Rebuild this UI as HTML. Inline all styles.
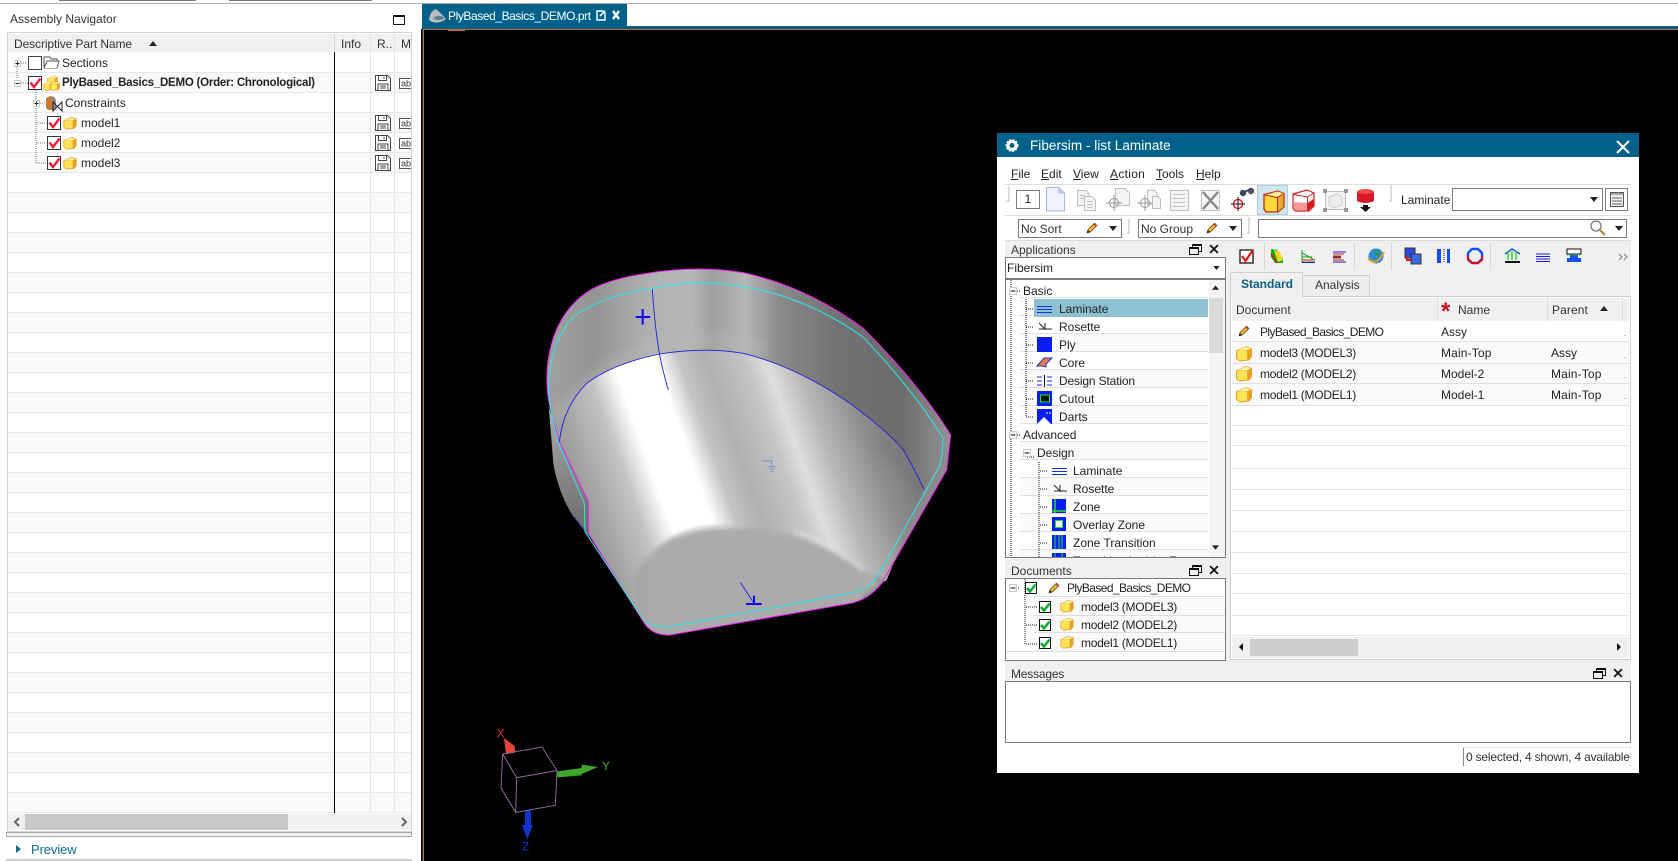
<!DOCTYPE html>
<html><head><meta charset="utf-8"><title>Assembly Navigator</title>
<style>
html,body{margin:0;padding:0;background:#fff}
#p{position:relative;width:1678px;height:861px;overflow:hidden;background:#fff;font:12px/16px "Liberation Sans",sans-serif;color:#222}
#p div{position:absolute;box-sizing:border-box}
.t{white-space:nowrap;height:16px}
.b{font-weight:bold}
.n{letter-spacing:-.6px}
.m{letter-spacing:-.27px}
svg{position:absolute;left:0;top:0;overflow:visible}
.box{background:#fff;border:1px solid #7a7a7a}
</style></head><body><div id="p">

<!-- top strips -->
<div style="left:59px;top:0;width:137px;height:1px;background:#777"></div>
<div style="left:229px;top:0;width:143px;height:1px;background:#777"></div>
<div style="left:0;top:3px;width:1678px;height:1px;background:#b0b0b0"></div>

<!-- left panel -->
<div class="t" style="left:10px;top:11px;color:#333">Assembly Navigator</div>
<div style="left:393px;top:15px;width:12px;height:10px;border:1px solid #111;border-top-width:2px"></div>
<div style="left:7px;top:32px;width:405px;height:800px;border:1px solid #d4d4d4;background:#fff"></div>
<div style="left:8px;top:34px;width:403px;height:18px;background:#f0f0f0"></div>
<div style="left:8px;top:53px;width:403px;height:760px;background:repeating-linear-gradient(#fff 0 19px,#e8e8e8 19px 20px,#f9f9f9 20px 39px,#e8e8e8 39px 40px)"></div>
<div style="left:370px;top:34px;width:1px;height:779px;background:#e4e4e4"></div>
<div style="left:394px;top:34px;width:1px;height:779px;background:#e4e4e4"></div>
<div style="left:334px;top:34px;width:1px;height:18px;background:#d8d8d8"></div>
<div style="left:334px;top:52px;width:1px;height:761px;background:#000"></div>
<div class="t" style="left:14px;top:36px;color:#333;letter-spacing:-.1px">Descriptive Part Name</div>
<div class="t" style="left:341px;top:36px;color:#333">Info</div>
<div class="t" style="left:377px;top:36px;color:#333">R..</div>
<div style="left:401px;top:36px;width:9px;height:16px;overflow:hidden;color:#333">M</div>
<div class="t" style="left:62px;top:55px">Sections</div>
<div class="t b" style="left:62px;top:75px;font-size:11.5px;letter-spacing:-.23px">PlyBased_Basics_DEMO (Order: Chronological)</div>
<div class="t" style="left:65px;top:95px">Constraints</div>
<div class="t" style="left:81px;top:115px">model1</div>
<div class="t" style="left:81px;top:135px">model2</div>
<div class="t" style="left:81px;top:155px">model3</div>
<div style="left:8px;top:814px;width:403px;height:16px;background:#f0f0f0"></div>
<div style="left:25px;top:814px;width:263px;height:16px;background:#c9c9c9"></div>
<div style="left:6px;top:832px;width:406px;height:5px;background:#efefef;border:1px solid #aaa"></div>
<div class="t" style="left:31px;top:842px;color:#0d6d94;font-size:13px;letter-spacing:-.1px">Preview</div>
<div style="left:6px;top:859px;width:406px;height:2px;background:#d0d0d0"></div>

<!-- viewport -->
<div style="left:421px;top:4px;width:1257px;height:857px;background:#000"></div>
<div style="left:421px;top:4px;width:1257px;height:25px;background:#fff"></div>
<div style="left:422px;top:4px;width:205px;height:24px;background:#00628b"></div>
<div style="left:422px;top:26px;width:1256px;height:3px;background:#00628b"></div>
<div style="left:423px;top:29px;width:1255px;height:1px;background:#c8682a"></div>
<div style="left:422px;top:29px;width:1px;height:832px;background:#00384f"></div>
<div style="left:423px;top:29px;width:1px;height:832px;background:#c8682a"></div>
<div style="left:448px;top:30px;width:17px;height:1px;background:#d05a7a"></div>
<div class="t" style="left:448px;top:8px;color:#fff;font-size:12px;letter-spacing:-.42px">PlyBased_Basics_DEMO.prt</div>

<!-- 3D scene -->
<svg style="left:530px;top:250px" width="450" height="400" viewBox="0 0 1350 1200">
<defs>
<linearGradient id="wall" gradientUnits="userSpaceOnUse" x1="50" y1="0" x2="1260" y2="0">
<stop offset="0" stop-color="#a0a0a0"/><stop offset=".12" stop-color="#949494"/><stop offset=".26" stop-color="#b2b2b2"/><stop offset=".36" stop-color="#b6b6b6"/><stop offset=".41" stop-color="#9e9e9e"/><stop offset=".49" stop-color="#b6b6b6"/><stop offset=".58" stop-color="#8a8a8a"/><stop offset=".72" stop-color="#727272"/><stop offset=".88" stop-color="#6c6c6c"/><stop offset="1" stop-color="#929292"/>
</linearGradient>
<linearGradient id="cone" gradientUnits="userSpaceOnUse" x1="100" y1="700" x2="1250" y2="293">
<stop offset="0" stop-color="#939393"/><stop offset=".06" stop-color="#a4a4a4"/><stop offset=".15" stop-color="#c4c4c4"/><stop offset=".215" stop-color="#fff"/><stop offset=".315" stop-color="#fff"/><stop offset=".37" stop-color="#c4c4c4"/><stop offset=".43" stop-color="#b0b0b0"/><stop offset=".52" stop-color="#c4c4c4"/><stop offset=".57" stop-color="#dedede"/><stop offset=".64" stop-color="#b8b8b8"/><stop offset=".74" stop-color="#8e8e8e"/><stop offset=".86" stop-color="#747474"/><stop offset="1" stop-color="#7a7a7a"/>
</linearGradient>
<linearGradient id="shell" gradientUnits="userSpaceOnUse" x1="60" y1="500" x2="170" y2="850">
<stop offset="0" stop-color="#a8a8a8"/><stop offset=".6" stop-color="#808080"/><stop offset="1" stop-color="#6a6a6a"/>
</linearGradient>
<filter id="bl" x="-20%" y="-20%" width="140%" height="140%"><feGaussianBlur stdDeviation="7"/></filter>
<filter id="bl2" x="-30%" y="-30%" width="160%" height="160%"><feGaussianBlur stdDeviation="18"/></filter>
<clipPath id="oc"><path d="M340 1115Q365 1158 420 1155L960 1060Q1015 1050 1055 1000L1250 660L1262 555Q1170 405 1000 235Q830 110 640 68Q500 45 350 70Q250 85 190 115Q110 160 75 250Q45 330 52 420Q55 470 90 580L175 755L175 850Z"/></clipPath>
<clipPath id="cc"><path d="M88 575Q100 470 170 400Q250 340 390 312Q520 290 640 310Q800 350 960 460Q1080 550 1120 600Q1150 650 1183 720L1070 990L960 1060L420 1155Q365 1158 340 1115L175 850L175 755Z"/></clipPath>
</defs>
<path d="M56 470L70 640Q85 730 130 800L178 860L178 755L90 580Z" fill="url(#shell)"/>
<path d="M132 800L178 862" stroke="#1a1ae0" stroke-width="2" fill="none"/>
<path d="M340 1115Q365 1158 420 1155L960 1060Q1015 1050 1055 1000L1250 660L1262 555Q1170 405 1000 235Q830 110 640 68Q500 45 350 70Q250 85 190 115Q110 160 75 250Q45 330 52 420Q55 470 90 580L175 755L175 850Z" fill="url(#wall)"/>
<g clip-path="url(#oc)"><path d="M90 500Q240 290 520 268Q600 270 690 295" stroke="#b8b8b8" stroke-width="36" stroke-linecap="round" fill="none" filter="url(#bl2)" opacity=".6"/></g>
<path d="M1183 720L1060 950L1055 1000L1250 660L1235 620Z" fill="#8b8b8b"/>
<g clip-path="url(#cc)">
<rect x="60" y="270" width="1200" height="900" fill="url(#cone)"/>
<path d="M1040 560Q1130 650 1180 730" stroke="#666" stroke-width="30" fill="none" filter="url(#bl2)" opacity=".3"/>
</g>
<g clip-path="url(#oc)">
<path d="M300 1030Q320 930 420 865Q500 828 600 832Q750 835 880 890Q980 935 1030 985L1060 1030L1000 1080L420 1175L330 1120Z" fill="#ababab" filter="url(#bl)"/>
<path d="M335 1095Q305 1020 350 935" stroke="#8a8a8a" stroke-width="14" fill="none" filter="url(#bl2)" opacity=".35"/>
<path d="M1035 980L1060 1000L1000 1050" stroke="#7c7c7c" stroke-width="16" fill="none" filter="url(#bl)" opacity=".6"/>
<path d="M440 862Q500 832 600 828" stroke="#c8c8c8" stroke-width="6" fill="none" filter="url(#bl)"/>
<path d="M790 840Q900 880 1000 960" stroke="#dedede" stroke-width="10" fill="none" filter="url(#bl)" opacity=".85"/>
</g>
<path d="M340 1115Q365 1158 420 1155L960 1060Q1015 1050 1055 1000L1250 660L1262 555Q1170 405 1000 235Q830 110 640 68Q500 45 350 70Q250 85 190 115Q110 160 75 250Q45 330 52 420Q55 470 90 580L175 755L175 850Z" fill="none" stroke="#f01cf0" stroke-width="3"/>
<path d="M340 1110Q365 1132 420 1130L960 1030Q1015 1020 1045 975L1228 650L1235 620L1240 565Q1150 420 1000 262Q830 140 640 110Q500 85 370 115Q220 135 130 200Q65 270 55 400Q55 480 90 590L163 760L165 845Z" fill="none" stroke="#2fe6e6" stroke-width="3"/>
<path d="M88 575Q100 470 170 400Q250 340 390 312Q520 290 640 310Q800 350 960 460Q1080 550 1120 600Q1150 650 1183 720" fill="none" stroke="#1c1ce0" stroke-width="2.6"/>
<path d="M367 118Q375 240 390 320Q400 370 415 420" fill="none" stroke="#1c1ce0" stroke-width="2.6"/>
<path d="M338 177V224M317 201H361" stroke="#0a0af0" stroke-width="6" fill="none"/>
<path d="M631 997L672 1060" stroke="#1c1ce0" stroke-width="2.6" fill="none"/>
<path d="M672 1037V1062M648 1062H695" stroke="#0a0af0" stroke-width="6" fill="none"/>
<path d="M697 633H725V648M712 650H738M716 657H734M720 664H730" stroke="#7a90d0" stroke-width="3" fill="none"/>
</svg>

<!-- triad -->
<svg style="left:470px;top:710px" width="170" height="150" viewBox="0 0 510 450">
<path d="M102 84L134 108L136 128L108 132Z" fill="#e8453a"/>
<path d="M262 184L335 174V164L384 171L335 192V196L262 202Z" fill="#3fa82a"/>
<path d="M165 300H183V345L189 345L172 388L155 345L165 345Z" fill="#1034c8"/>
<path d="M98 132L216 111L261 182L140 203ZM98 132L93 234L137 307L140 203M137 307L256 286L261 182" fill="none" stroke="#8c6a92" stroke-width="3"/>
<text x="80" y="83" fill="#d8372e" font-family="Liberation Sans" font-size="36">X</text>
<text x="396" y="180" fill="#3fa82a" font-family="Liberation Sans" font-size="36">Y</text>
<text x="156" y="422" fill="#1034e0" font-family="Liberation Sans" font-size="36">Z</text>
</svg>

<!-- Fibersim window -->
<div style="left:997px;top:133px;width:642px;height:640px;background:#fff"></div>
<div style="left:997px;top:133px;width:642px;height:24px;background:#00628b"></div>
<div class="t" style="left:1030px;top:138px;color:#fff;font-size:13.5px;letter-spacing:.05px">Fibersim - list Laminate</div>
<div class="t" style="left:1011px;top:166px"><u>F</u>ile</div>
<div class="t" style="left:1041px;top:166px"><u>E</u>dit</div>
<div class="t" style="left:1073px;top:166px"><u>V</u>iew</div>
<div class="t" style="left:1110px;top:166px;letter-spacing:.3px"><u>A</u>ction</div>
<div class="t" style="left:1156px;top:166px"><u>T</u>ools</div>
<div class="t" style="left:1196px;top:166px"><u>H</u>elp</div>
<div style="left:1005px;top:184px;width:626px;height:1px;background:#dcdcdc"></div>
<div style="left:1005px;top:215px;width:626px;height:1px;background:#dcdcdc"></div>
<div style="left:1005px;top:240px;width:626px;height:1px;background:#dcdcdc"></div>
<div style="left:1005px;top:241px;width:626px;height:504px;background:#f0f0f0"></div>
<div style="left:1257px;top:185px;width:31px;height:30px;background:#cfe6ef;border:1px solid #a8d0de"></div>
<div class="box" style="left:1016px;top:190px;width:24px;height:19px;text-align:center;line-height:17px">1</div>
<div class="box" style="left:1018px;top:219px;width:104px;height:19px;padding-left:2px;line-height:18px;color:#333">No Sort</div>
<div class="box" style="left:1138px;top:219px;width:104px;height:19px;padding-left:2px;line-height:18px;color:#333">No Group</div>
<div class="box" style="left:1258px;top:219px;width:369px;height:19px"></div>
<div class="t" style="left:1401px;top:192px">Laminate</div>
<div class="box" style="left:1452px;top:188px;width:151px;height:23px"></div>
<div class="box" style="left:1605px;top:188px;width:23px;height:23px"></div>

<!-- applications -->
<div class="t" style="left:1011px;top:242px;color:#333">Applications</div>
<div class="box" style="left:1005px;top:257px;width:221px;height:22px;padding-left:1px;line-height:20px">Fibersim</div>
<div class="box" style="left:1005px;top:279px;width:221px;height:279px"></div>
<div style="left:1209px;top:280px;width:16px;height:277px;background:#f4f4f4"></div>
<div style="left:1209px;top:298px;width:14px;height:55px;background:#d9d9d9"></div>
<div style="left:1020px;top:280px;width:188px;height:277px;overflow:hidden">
<div style="left:0;top:0;width:188px;height:277px;background:repeating-linear-gradient(#fff 0 17px,#e0e0e0 17px 18px,#fafafa 18px 35px,#e0e0e0 35px 36px)"></div>
</div>
<div style="left:1034px;top:299px;width:174px;height:18px;background:#8dc1d1"></div>
<div class="t" style="left:1023px;top:283px">Basic</div>
<div class="t" style="left:1059px;top:301px">Laminate</div>
<div class="t" style="left:1059px;top:319px">Rosette</div>
<div class="t" style="left:1059px;top:337px">Ply</div>
<div class="t" style="left:1059px;top:355px">Core</div>
<div class="t" style="left:1059px;top:373px;letter-spacing:-.15px">Design Station</div>
<div class="t" style="left:1059px;top:391px">Cutout</div>
<div class="t" style="left:1059px;top:409px">Darts</div>
<div class="t" style="left:1023px;top:427px">Advanced</div>
<div class="t" style="left:1037px;top:445px">Design</div>
<div class="t" style="left:1073px;top:463px">Laminate</div>
<div class="t" style="left:1073px;top:481px">Rosette</div>
<div class="t" style="left:1073px;top:499px">Zone</div>
<div class="t" style="left:1073px;top:517px">Overlay Zone</div>
<div class="t" style="left:1073px;top:535px">Zone Transition</div>
<div style="left:1073px;top:553px;height:4px;width:130px;overflow:hidden;white-space:nowrap">Transition Ladder Zone</div>

<!-- documents -->
<div class="t" style="left:1011px;top:563px;color:#333">Documents</div>
<div class="box" style="left:1005px;top:578px;width:221px;height:83px"></div>
<div style="left:1034px;top:596px;width:191px;height:1px;background:#ddd"></div>
<div style="left:1034px;top:597px;width:191px;height:54px;background:#f9f9f9"></div>
<div style="left:1034px;top:615px;width:191px;height:1px;background:#ddd"></div>
<div style="left:1034px;top:632px;width:191px;height:1px;background:#ddd"></div>
<div style="left:1006px;top:651px;width:219px;height:1px;background:#ddd"></div>
<div class="t n" style="left:1067px;top:580px">PlyBased_Basics_DEMO</div>
<div class="t m" style="left:1081px;top:599px">model3 (MODEL3)</div>
<div class="t m" style="left:1081px;top:617px">model2 (MODEL2)</div>
<div class="t m" style="left:1081px;top:635px">model1 (MODEL1)</div>

<!-- messages -->
<div class="t" style="left:1011px;top:666px;color:#333;letter-spacing:-.2px">Messages</div>
<div class="box" style="left:1005px;top:681px;width:626px;height:62px"></div>
<div style="left:1005px;top:743px;width:626px;height:30px;background:#fff"></div>
<div class="t" style="left:1463px;top:747px;width:168px;height:19px;border-left:1px solid #888;border-top:1px solid #e4e4e4;border-right:1px solid #e4e4e4;background:#fff;padding-left:2px;line-height:18px;color:#333;letter-spacing:-.2px">0 selected, 4 shown, 4 available</div>

<!-- tabs and list -->
<div style="left:1230px;top:296px;width:401px;height:364px;background:#fff;border:1px solid #cfcfcf"></div>
<div style="left:1230px;top:272px;width:73px;height:26px;background:#f0f0f0;border:1px solid #cfcfcf;border-bottom:0"></div>
<div style="left:1303px;top:275px;width:67px;height:21px;background:#eee;border:1px solid #cfcfcf;border-left:0;border-bottom:0"></div>
<div class="t b" style="left:1241px;top:276px;color:#0b5f84">Standard</div>
<div class="t" style="left:1315px;top:277px;color:#333">Analysis</div>
<div style="left:1232px;top:298px;width:397px;height:23px;background:#f0f0f0"></div>
<div style="left:1437px;top:298px;width:1px;height:23px;background:#dcdcdc"></div>
<div style="left:1547px;top:298px;width:1px;height:23px;background:#dcdcdc"></div>
<div style="left:1622px;top:298px;width:1px;height:23px;background:#dcdcdc"></div>
<div class="t" style="left:1236px;top:302px;color:#333">Document</div>
<div class="t" style="left:1458px;top:302px;color:#333">Name</div>
<div class="t" style="left:1552px;top:302px;color:#333;letter-spacing:.1px">Parent</div>
<div style="left:1232px;top:341px;width:397px;height:64px;background:#f9f9f9"></div>
<div class="t n" style="left:1260px;top:324px">PlyBased_Basics_DEMO</div>
<div class="t" style="left:1441px;top:324px">Assy</div>
<div class="t m" style="left:1260px;top:345px">model3 (MODEL3)</div>
<div class="t" style="left:1441px;top:345px;letter-spacing:.15px">Main-Top</div>
<div class="t" style="left:1551px;top:345px">Assy</div>
<div class="t m" style="left:1260px;top:366px">model2 (MODEL2)</div>
<div class="t" style="left:1441px;top:366px">Model-2</div>
<div class="t" style="left:1551px;top:366px;letter-spacing:.15px">Main-Top</div>
<div class="t m" style="left:1260px;top:387px">model1 (MODEL1)</div>
<div class="t" style="left:1441px;top:387px">Model-1</div>
<div class="t" style="left:1551px;top:387px;letter-spacing:.15px">Main-Top</div>
<div style="left:1232px;top:341px;width:397px;height:1px;background:#e0e0e0"></div>
<div style="left:1232px;top:363px;width:397px;height:1px;background:#e0e0e0"></div>
<div style="left:1232px;top:383px;width:397px;height:1px;background:#e0e0e0"></div>
<div style="left:1232px;top:405px;width:397px;height:1px;background:#e0e0e0"></div>
<div style="left:1232px;top:425px;width:397px;height:1px;background:#e8e8e8"></div>
<div style="left:1232px;top:445px;width:397px;height:1px;background:#e8e8e8"></div>
<div style="left:1232px;top:468px;width:397px;height:1px;background:#e8e8e8"></div>
<div style="left:1232px;top:489px;width:397px;height:1px;background:#e8e8e8"></div>
<div style="left:1232px;top:510px;width:397px;height:1px;background:#e8e8e8"></div>
<div style="left:1232px;top:531px;width:397px;height:1px;background:#e8e8e8"></div>
<div style="left:1232px;top:552px;width:397px;height:1px;background:#e8e8e8"></div>
<div style="left:1232px;top:573px;width:397px;height:1px;background:#e8e8e8"></div>
<div style="left:1232px;top:593px;width:397px;height:1px;background:#e8e8e8"></div>
<div style="left:1232px;top:615px;width:397px;height:1px;background:#e8e8e8"></div>
<div style="left:1232px;top:635px;width:397px;height:1px;background:#e8e8e8"></div>
<div style="left:1232px;top:637px;width:397px;height:21px;background:#f0f0f0"></div>
<div style="left:1250px;top:639px;width:108px;height:17px;background:#cdcdcd"></div>

<!-- icon overlay -->
<svg width="1678" height="861" viewBox="0 0 1678 861" style="pointer-events:none">
<defs>
<symbol id="cube" viewBox="0 0 16 16" overflow="visible"><path d="M.5 5L10 1L15.500 3V11L13 14.500L4 15.500L.5 13Z" fill="#e8a020"/><path d="M1.500 5.500L11 5V13.800L3.500 14.500L1.500 12.500Z" fill="#ffe45a"/><path d="M1.500 5L10 1.800L14.500 3.300L11 4.800Z" fill="#fff4a8"/></symbol>
<symbol id="chk" viewBox="0 0 14 14"><rect x=".5" y=".5" width="13" height="13" fill="#fff" stroke="#333"/><path d="M2.500 6.500L6 11L12.500 2.500" fill="none" stroke="#ef1c3c" stroke-width="2.400"/></symbol>
<symbol id="gck" viewBox="0 0 12 12"><rect x=".5" y=".5" width="11" height="11" fill="#fff" stroke="#111"/><path d="M2 6L5 9.500L10.500 2.500" fill="none" stroke="#0cae32" stroke-width="2.600"/></symbol>
<symbol id="sv" viewBox="0 0 16 16"><path d="M.5.5H12.500L15.500 3.500V15.500H.5Z" fill="#fff" stroke="#444"/><path d="M3.500.5V5.500H11.500V.5M9 2V4M3 15.500V9H13V15.500M5 11H11M5 13H11" fill="none" stroke="#444"/></symbol>
<symbol id="ab" viewBox="0 0 12 11"><path d="M12 .5H.5V10.500H12" fill="#fff" stroke="#555"/><text x="2" y="8.500" font-family="Liberation Sans" font-size="9" fill="#333">ab</text></symbol>
<symbol id="pl" viewBox="0 0 7 7"><rect x=".5" y=".5" width="6" height="6" fill="#fff" stroke="#ccc"/><path d="M1.500 3.500H5.500M3.500 1.500V5.500" stroke="#222"/></symbol>
<symbol id="mn" viewBox="0 0 7 7"><rect x=".5" y=".5" width="6" height="6" fill="#fff" stroke="#ccc"/><path d="M1.500 3.500H5.500" stroke="#222"/></symbol>
<symbol id="pen" viewBox="0 0 12 12"><path d="M1 11L2 7.500L8.500 1.200L11 3.500L4.500 10Z" fill="#f4b820" stroke="#222" stroke-width=".6"/><path d="M8.500 1.200L11 3.500L9.800 4.800L7.200 2.400Z" fill="#d83a2a"/><path d="M1 11L2 8L4 10Z" fill="#222"/></symbol>
<symbol id="lam" viewBox="0 0 15 9"><path d="M0 1.500H15M0 4.500H15M0 7.500H15" stroke="#1133dd" stroke-width="1"/></symbol>
<symbol id="ros" viewBox="0 0 14 10"><path d="M1 1L7 7V1M7 7H14M1 7L7 7" fill="none" stroke="#222" stroke-width="1"/></symbol>
<symbol id="ply" viewBox="0 0 14 14"><rect width="14" height="14" fill="#0a1ef0"/></symbol>
<symbol id="mx" viewBox="0 0 9 9"><path d="M1 1L8 8M8 1L1 8" stroke="#111" stroke-width="1.600"/></symbol>
<symbol id="rs" viewBox="0 0 13 11"><rect x="3.500" y=".5" width="9" height="7" fill="none" stroke="#111"/><rect x=".5" y="3.500" width="9" height="7" fill="#f0f0f0" stroke="#111"/><path d="M3.500 1.500H12.500M.5 4.500H9.500" stroke="#111"/></symbol>
<symbol id="dn" viewBox="0 0 8 5"><path d="M0 0H8L4 5Z" fill="#222"/></symbol>
<symbol id="up" viewBox="0 0 8 5"><path d="M0 5H8L4 0Z" fill="#222"/></symbol>
</defs>

<!-- nav sort -->
<use href="#up" x="148" y="41" width="10" height="5"/>
<!-- nav tree -->
<path d="M17 67V78M21 63H27M21 83H28M36 88V163H46M40 103H45M36 123H46M36 143H46" fill="none" stroke="#777" stroke-dasharray="1 1"/>
<use href="#pl" x="14" y="60" width="7" height="7"/>
<use href="#mn" x="14" y="80" width="7" height="7"/>
<use href="#pl" x="33" y="100" width="7" height="7"/>
<rect x="28.500" y="56.500" width="13" height="13" fill="#fff" stroke="#444"/>
<path d="M44 57H50L51 59H57V68H44Z" fill="#fff" stroke="#555"/><path d="M44 68L47 61H59L57 68" fill="#fff" stroke="#555"/>
<use href="#chk" x="28" y="76" width="14" height="14"/>
<use href="#cube" x="47" y="75" width="11" height="11"/><use href="#cube" x="43" y="81" width="10" height="10"/><use href="#cube" x="50" y="81" width="10" height="10"/>
<path d="M46 98L50 96L54 97L56 100V108L53 110H48L46 108Z" fill="#c87a3a"/><path d="M50 96L54 97L56 100V108L53 110V100Z" fill="#8a8a8a"/><path d="M53 102L62 111V102L53 111Z" fill="none" stroke="#222"/>
<use href="#chk" x="47" y="116" width="14" height="14"/><use href="#cube" x="63" y="116" width="14" height="14"/>
<use href="#chk" x="47" y="136" width="14" height="14"/><use href="#cube" x="63" y="136" width="14" height="14"/>
<use href="#chk" x="47" y="156" width="14" height="14"/><use href="#cube" x="63" y="156" width="14" height="14"/>
<use href="#sv" x="375" y="75" width="16" height="16"/><use href="#ab" x="399" y="78" width="12" height="11"/>
<use href="#sv" x="375" y="115" width="16" height="16"/><use href="#ab" x="399" y="118" width="12" height="11"/>
<use href="#sv" x="375" y="135" width="16" height="16"/><use href="#ab" x="399" y="138" width="12" height="11"/>
<use href="#sv" x="375" y="155" width="16" height="16"/><use href="#ab" x="399" y="158" width="12" height="11"/>
<!-- nav scrollbar arrows -->
<path d="M19 818L15 822L19 826M402 818L406 822L402 826" fill="none" stroke="#666" stroke-width="2"/>
<path d="M16 845L21 849L16 853Z" fill="#0d6d94"/>
<!-- tab icons -->
<path d="M429 20Q430 11 436 9Q441 13 446 19Q440 24 432 22Z" fill="#b8bcc0"/><ellipse cx="439" cy="18" rx="5" ry="2" fill="#5a7f90"/>
<path d="M597 20V11H603L605 13V20Z" fill="none" stroke="#fff" stroke-width="1.400"/><path d="M600 16L605 11" stroke="#fff" stroke-width="1.600"/>
<path d="M613 11L619 19M619 11L613 19" stroke="#fff" stroke-width="2.400"/>
<!-- title icons -->
<circle cx="1012" cy="145.500" r="4" fill="none" stroke="#fff" stroke-width="3"/><circle cx="1012" cy="145.500" r="5.700" fill="none" stroke="#fff" stroke-width="1.500" stroke-dasharray="2 1.400"/>
<path d="M1617 141L1629 153M1629 141L1617 153" stroke="#fff" stroke-width="2"/>
<!-- grip handles -->
<path d="M1009 186V201H1006M1129 219V233H1127M1249 217V233H1247M1391 185V201H1389" fill="none" stroke="#bbb"/>
<!-- toolbar -->
<path d="M1046.500 187.500H1059L1064.500 193V211H1046.500Z" fill="#f0f2ff" stroke="#a9b6e0"/><path d="M1059 187.500V193H1064.500" fill="#c7d0f0" stroke="#a9b6e0"/>
<g fill="#f4f4f4" stroke="#c0c0c0">
<path d="M1077.500 190.500H1086L1089 193.500V205.500H1077.500Z"/><path d="M1084.500 196.500H1092L1095.500 200V210.500H1084.500Z"/>
<path d="M1115.500 188.500H1125L1129.500 193V205.500H1115.500Z"/>
<path d="M1147.500 190.500H1154L1157 193V204.500H1147.500Z"/><path d="M1152.500 196.500H1158L1160.500 199V208.500H1152.500Z"/>
<path d="M1170.500 190.500H1188.500V210.500H1170.500Z"/>
<path d="M1201.500 190.500H1219.500V210.500H1201.500Z"/></g>
<path d="M1173 194.500H1185M1173 198.500H1185M1173 202.500H1185M1173 206.500H1185M1087 201.500H1093M1087 204.500H1093M1087 207.500H1093M1080 195.500H1085M1080 198.500H1085" stroke="#c4c4c4"/>
<circle cx="1114" cy="203" r="4.500" fill="none" stroke="#999"/><path d="M1106 203H1122M1114 195V211" stroke="#999"/>
<circle cx="1145" cy="203" r="4.500" fill="none" stroke="#999"/><path d="M1137 203H1153M1145 195V211" stroke="#999"/>
<path d="M1203 192L1218 209M1218 192L1203 209" stroke="#888" stroke-width="2.400"/>
<circle cx="1238" cy="204" r="4.500" fill="none" stroke="#e00" stroke-width="1.200"/><path d="M1231 204H1245M1238 197V211" stroke="#111"/>
<circle cx="1243" cy="193" r="3.200" fill="#3a4560"/><circle cx="1251" cy="191" r="3.200" fill="#556"/><path d="M1244 192L1251 189" stroke="#3a4560" stroke-width="2"/>
<path d="M1264 194.500L1278 191L1284 193.500V207L1278 212H1266L1264 209Z" fill="#ffd83a" stroke="#c02a10" stroke-width="1.300"/><path d="M1264.500 195L1277.500 197.500L1283.500 193.500L1278 191.500Z" fill="#fff0a0"/><path d="M1264.500 195L1277.500 197.500L1284 193.500M1277.500 197.500V212" fill="none" stroke="#c02a10" stroke-width="1.100"/><path d="M1278 198L1283.500 194V207L1278 211.500Z" fill="#e8a828"/>
<path d="M1293 194L1307 190L1314 193V206L1309 211H1295L1293 208Z" fill="#fff" stroke="#d02020" stroke-width="1.200"/><path d="M1294 202L1307 203V210.500H1295L1293.500 208Z" fill="#f89a9a"/><path d="M1307.500 203L1313.500 199V206L1308.500 210.500H1307.500Z" fill="#d81a1a"/><path d="M1293.500 194.500L1307.500 197L1314 193M1307.500 197V211" fill="none" stroke="#d02020"/>
<path d="M1325.500 191.500H1345.500V209.500H1325.500Z" fill="#f4f4f4" stroke="#bbb"/><path d="M1329 197L1337 194L1342 197V205L1334 208L1329 205Z" fill="#eee" stroke="#ccc"/>
<path d="M1323 189H1327V193H1323ZM1344 189H1348V193H1344ZM1323 208H1327V212H1323ZM1344 208H1348V212H1344Z" fill="#999"/>
<ellipse cx="1365.500" cy="192" rx="8.500" ry="3" fill="#f04a50"/><path d="M1357 192V201Q1365 205 1374 201V192Q1365 196 1357 192Z" fill="#d81a26"/><path d="M1363 205H1368V207H1371L1365.500 212L1360 207H1363Z" fill="#111"/>
<use href="#dn" x="1590" y="197" width="8" height="5"/>
<rect x="1610.500" y="192.500" width="13" height="14" fill="#eee" stroke="#555"/><path d="M1611 194H1623M1612 198H1622M1612 201H1622M1612 204H1622" stroke="#666"/>
<!-- second row -->
<use href="#pen" x="1086" y="222" width="12" height="12"/><use href="#dn" x="1109" y="226" width="8" height="5"/>
<use href="#pen" x="1206" y="222" width="12" height="12"/><use href="#dn" x="1229" y="226" width="8" height="5"/>
<circle cx="1596" cy="226" r="5" fill="none" stroke="#778" stroke-width="1.300"/><path d="M1600 230L1605 235" stroke="#b9862a" stroke-width="2.200"/>
<use href="#dn" x="1615" y="226" width="8" height="5"/>
<!-- panel head -->
<use href="#rs" x="1189" y="244" width="13" height="11"/><use href="#mx" x="1209" y="244" width="10" height="10"/>
<use href="#rs" x="1189" y="565" width="13" height="11"/><use href="#mx" x="1209" y="565" width="10" height="10"/>
<use href="#rs" x="1593" y="668" width="13" height="11"/><use href="#mx" x="1613" y="668" width="10" height="10"/>
<use href="#dn" x="1213" y="266" width="7" height="4"/>
<!-- tree -->
<path d="M1011 280V431M1013 291H1020M1026 299V417H1034M1013 435H1020M1027 457H1034M1011 439V557M1039 462V557M1026 309H1034M1026 327H1034M1026 345H1034M1026 363H1034M1026 381H1034M1026 399H1034M1040 471H1048M1040 489H1048M1040 507H1048M1040 525H1048M1040 543H1048" fill="none" stroke="#111" stroke-dasharray="1 1"/>
<use href="#mn" x="1009" y="287" width="8" height="8"/><use href="#mn" x="1009" y="431" width="8" height="8"/><use href="#mn" x="1023" y="449" width="8" height="8"/>
<use href="#up" x="1212" y="285" width="7" height="5"/><use href="#dn" x="1212" y="545" width="7" height="5"/>
<use href="#lam" x="1037" y="305" width="15" height="9"/>
<use href="#ros" x="1038" y="322" width="14" height="10"/>
<use href="#ply" x="1037" y="337" width="15" height="15"/>
<path d="M1037 366L1044 358H1052L1046 364V367L1043 366Z" fill="#ee7c3c" stroke="#1133dd" stroke-width="1"/>
<path d="M1037 377H1042M1037 381H1042M1037 385H1042M1047 377H1052M1047 381H1052M1047 385H1052" stroke="#1133dd"/><path d="M1044.500 375V387" stroke="#111" stroke-width="1"/>
<use href="#ply" x="1037" y="391" width="15" height="15"/><rect x="1040.500" y="395" width="9" height="7" fill="#111" stroke="#19e819"/>
<use href="#ply" x="1037" y="409" width="15" height="15"/><path d="M1037 424L1044 417L1051 424Z" fill="#fff"/><path d="M1046 413H1051" stroke="#fff" stroke-dasharray="2 1"/>
<use href="#lam" x="1052" y="467" width="15" height="9"/>
<use href="#ros" x="1053" y="484" width="14" height="10"/>
<use href="#ply" x="1052" y="499" width="14" height="14"/><path d="M1055 499V513M1052 511H1066" stroke="#19e819" stroke-width="1.500"/>
<use href="#ply" x="1052" y="517" width="14" height="14"/><rect x="1055.500" y="520.500" width="7" height="7" fill="#fff" stroke="#19e819"/>
<use href="#ply" x="1052" y="535" width="14" height="14"/><path d="M1055 535V549M1059 535V549M1062 535V549" stroke="#19e819"/>
<rect x="1052" y="553" width="14" height="4" fill="#0a1ef0"/><path d="M1055 553V557M1062 553V557" stroke="#19e819"/>
<!-- documents tree -->
<path d="M1025 579V644H1037M1012 588H1020M1026 607H1037M1026 625H1037" fill="none" stroke="#111" stroke-dasharray="1 1"/>
<use href="#mn" x="1009" y="584" width="8" height="8"/>
<use href="#gck" x="1025" y="582" width="12" height="12"/><use href="#pen" x="1048" y="582" width="12" height="12"/>
<use href="#gck" x="1039" y="601" width="12" height="12"/><use href="#cube" x="1060" y="599" width="14" height="14"/>
<use href="#gck" x="1039" y="619" width="12" height="12"/><use href="#cube" x="1060" y="617" width="14" height="14"/>
<use href="#gck" x="1039" y="637" width="12" height="12"/><use href="#cube" x="1060" y="635" width="14" height="14"/>
<!-- right toolbar -->
<path d="M1240 250H1253V263H1240Z" fill="#fff" stroke="#111" stroke-width="1.300"/><path d="M1242 256L1245.500 261L1253 250" fill="none" stroke="#e41010" stroke-width="2.200"/>
<path d="M1271 249L1277 250L1283 259L1283 263L1275 263L1271 257Z" fill="#18a818"/><path d="M1274 250L1280 252L1283 260L1278 262Z" fill="#f4d820"/><path d="M1271 254L1277 263" stroke="#d01818" stroke-width="1.500"/>
<path d="M1302 250V262H1315M1302 253L1313 259M1302 257H1312" fill="none" stroke="#1a9e1a" stroke-width="1"/><path d="M1302 260H1315" stroke="#e01010"/><path d="M1302 262.500H1315" stroke="#1a1ae0"/>
<path d="M1333 252H1346M1333 262H1346" stroke="#1a1ae0"/><path d="M1333 257H1341" stroke="#7a3a3a" stroke-width="3"/><path d="M1333 254H1344" stroke="#e01010"/><path d="M1333 260H1344" stroke="#e01010"/>
<circle cx="1376" cy="256" r="7.500" fill="#2a8ae0"/><path d="M1368 258Q1376 268 1384 252" fill="none" stroke="#e8a020" stroke-width="2"/><path d="M1371 249L1377 253L1380 248L1378 257Z" fill="#2a9a2a"/>
<rect x="1405" y="248" width="10" height="10" fill="#2a4ae0" stroke="#333"/><rect x="1411" y="254" width="10" height="10" fill="#3a6ae0" stroke="#333"/><path d="M1407 256V260H1411" stroke="#e01010" stroke-width="2" fill="none"/>
<path d="M1437 249H1441V263H1437ZM1447 249H1450V263H1447Z" fill="#1050f0"/><path d="M1444 249V263" stroke="#111" stroke-dasharray="1 1"/>
<path d="M1472 249H1478L1482 253V259L1478 263H1472L1468 259V253Z" fill="none" stroke="#1050f0" stroke-width="2.400"/><path d="M1468 256V260L1472 263H1478L1482 260V256" fill="none" stroke="#e01010" stroke-width="2"/>
<path d="M1505 254L1512 249L1520 254" fill="none" stroke="#1050f0" stroke-width="1.400"/><path d="M1508 260V251M1512 260V251M1516 260V251" stroke="#18d018" stroke-width="1.300"/><path d="M1505 262H1520" stroke="#111" stroke-width="2"/>
<path d="M1536 254H1550M1536 256.500H1550M1536 259H1550M1536 261.500H1550" stroke="#1a1ae0"/>
<rect x="1567" y="249" width="14" height="5" fill="#fff" stroke="#111"/><path d="M1567 262V258H1570V255H1578V258H1581V262Z" fill="#1050f0"/><path d="M1567 255H1581" stroke="#18d018" stroke-dasharray="1 1"/>
<path d="M1619 254L1622 257L1619 260M1624 254L1627 257L1624 260" fill="none" stroke="#888" stroke-width="1.200"/>
<path d="M1264.500 243V270M1354.500 243V270M1391.500 243V270M1490.500 243V270" stroke="#d8d8d8"/>
<!-- list -->
<use href="#up" x="1600" y="306" width="8" height="5"/>
<text x="1441" y="319" font-family="Liberation Sans" font-size="24" font-weight="bold" fill="#d80a1a">*</text>
<use href="#pen" x="1238" y="325" width="12" height="12"/>
<use href="#cube" x="1235" y="345" width="18" height="17"/><use href="#cube" x="1235" y="365" width="18" height="17"/><use href="#cube" x="1235" y="386" width="18" height="17"/>
<path d="M1625 335v1M1625 357v1M1625 377v1M1625 398v1" stroke="#c98a3a"/>
<path d="M1243 643L1239 647L1243 651Z" fill="#111"/><path d="M1617 643L1621 647L1617 651Z" fill="#111"/>
</svg>
</div></body></html>
